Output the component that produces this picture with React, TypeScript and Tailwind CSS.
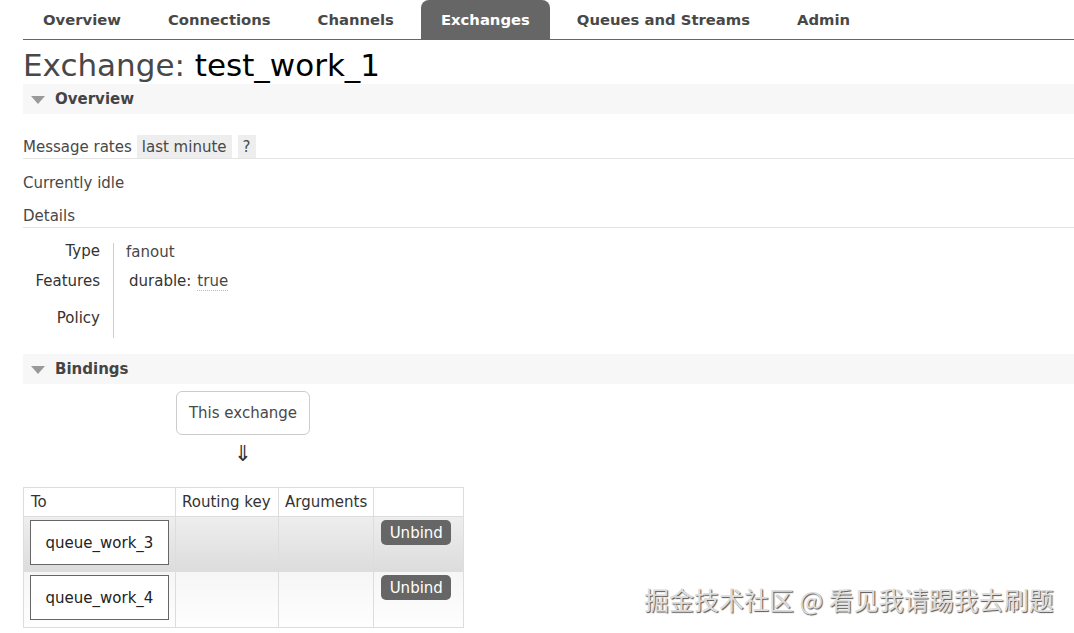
import React from 'react';

const tabs = ['Overview', 'Connections', 'Channels', 'Exchanges', 'Queues and Streams', 'Admin'];

function SectionHeader({ title }: { title: string }) {
  return (
    <div className="flex items-center h-[30px] bg-[#f7f7f7] pl-[8px]">
      <span className="w-0 h-0 border-l-[7px] border-r-[7px] border-t-[8px] border-l-transparent border-r-transparent border-t-[#999] mr-[10px] mt-[2px]" />
      <span className="font-bold text-[15px] text-[#444]">{title}</span>
    </div>
  );
}

export default function App() {
  const bindings = ['queue_work_3', 'queue_work_4'];
  return (
    <div className="relative w-[1074px] h-[633px] overflow-hidden bg-white text-[#484848] font-['DejaVu_Sans',Verdana,sans-serif] text-[15px] leading-[20px]">
      {/* nav */}
      <div className="ml-[23px] flex h-[40px] border-b border-[#666]">
        {tabs.map((t) => (
          <div
            key={t}
            className={
              t === 'Exchanges'
                ? 'flex items-center px-[20px] bg-[#666] text-white font-bold text-[14.8px] rounded-t-[8px] mr-[7px]'
                : 'flex items-center px-[20px] text-[#484848] font-bold text-[14.8px] mr-[7px]'
            }
          >
            {t}
          </div>
        ))}
      </div>

      <div className="pl-[23px]">
        <h1 className="text-[31px] leading-[43px] h-[43px] text-[#484848] mt-[1px] whitespace-nowrap">
          <span className="relative top-[3px]">
            Exchange: <span className="text-black">test_work_1</span>
          </span>
        </h1>

        <SectionHeader title="Overview" />

        <div className="mt-[21px] flex items-center border-b border-[#e4e4e4] h-[24px]">
          <span>Message rates</span>
          <span className="ml-[5px] bg-[#eee] px-[5px] h-[23px] flex items-center">last minute</span>
          <span className="ml-[6px] bg-[#eee] px-[5px] h-[23px] flex items-center">?</span>
        </div>

        <div className="mt-[14px] h-[20px]">Currently idle</div>
        <div className="mt-[13px] h-[22px] border-b border-[#e4e4e4]">Details</div>

        <div className="flex mt-[15px]">
          <div className="w-[77px] text-right flex flex-col text-[#333]">
            <div className="h-[16px] leading-[16px]">Type</div>
            <div className="h-[16px] leading-[16px] mt-[14px]">Features</div>
            <div className="h-[16px] leading-[16px] mt-[21px]">Policy</div>
          </div>
          <div className="ml-[13px] border-l border-[#ccc] h-[95px] pl-[12px] flex flex-col">
            <div className="h-[16px] leading-[16px] mt-[1px]">fanout</div>
            <div className="h-[16px] leading-[16px] mt-[13px] pl-[3px] flex items-end">
              <span className="text-[#333]">durable:</span>
              <span className="ml-[6px] border-b border-dotted border-[#bbb] translate-y-[2px] leading-[18px]">true</span>
            </div>
          </div>
        </div>

        <div className="mt-[16px]">
          <SectionHeader title="Bindings" />
        </div>

        <div className="ml-[153px] mt-[7px] w-[134px] h-[44px] border border-[#ccc] rounded-[6px] flex items-center justify-center text-[#484848]">
          This exchange
        </div>
        <div className="ml-[153px] w-[134px] text-center text-[22px] leading-[38px] h-[38px] text-[#333]">⇓</div>

        <table className="mt-[14px] border-collapse text-[15px]">
          <thead>
            <tr className="h-[29px] text-[#333]">
              <th className="font-normal text-left border border-[#ddd] w-[152px] pl-[7px]">To</th>
              <th className="font-normal text-left border border-[#ddd] w-[103px] px-[6px]">Routing key</th>
              <th className="font-normal text-left border border-[#ddd] w-[95px] px-[6px]">Arguments</th>
              <th className="border border-[#ddd] w-[90px]"></th>
            </tr>
          </thead>
          <tbody>
            {bindings.map((b, i) => (
              <tr
                key={b}
                className={
                  i === 0
                    ? 'h-[55px] bg-gradient-to-b from-[#eeeeee] to-[#dcdcdc]'
                    : 'h-[56px] bg-gradient-to-b from-[#f6f6f6] to-[#fefefe]'
                }
              >
                <td className="border border-[#ddd] px-[6px] py-[3px] align-top">
                  <div className="h-[45px] w-[139px] border border-[#666] bg-white flex items-center justify-center text-[#222]">
                    {b}
                  </div>
                </td>
                <td className="border border-[#ddd]"></td>
                <td className="border border-[#ddd]"></td>
                <td className="border border-[#ddd] align-top pl-[7px] pt-[3px]">
                  <div className="w-[70px] h-[25px] rounded-[5px] bg-[#666] text-white text-[15px] flex items-center justify-center">
                    Unbind
                  </div>
                </td>
              </tr>
            ))}
          </tbody>
        </table>
      </div>

      {/* watermark */}
      <div className="absolute left-[644px] top-[583px] text-[25px] leading-[32px] text-[#ddd] [text-shadow:1px_1px_1px_#555] font-['Noto_Sans_CJK_SC',sans-serif] whitespace-nowrap">
        掘金技术社区 @ 看见我请踢我去刷题
      </div>
    </div>
  );
}
